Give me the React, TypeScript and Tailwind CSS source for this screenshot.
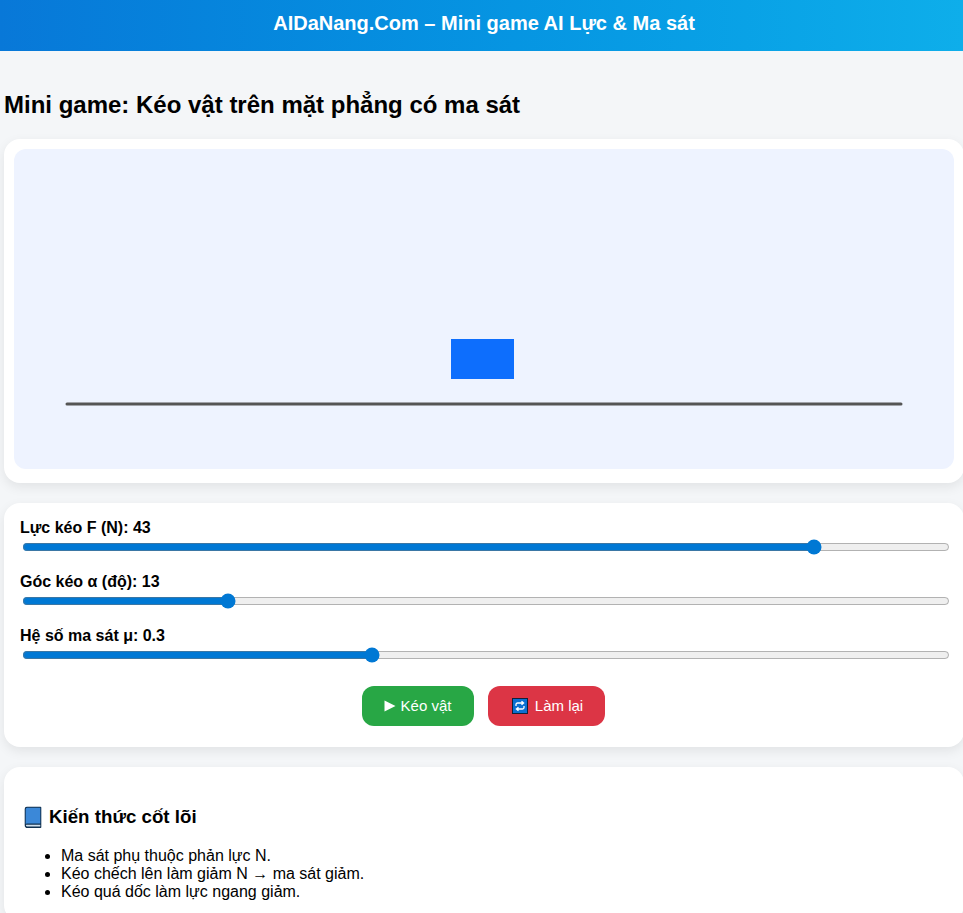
import { useState } from "react";

function RepeatIcon() {
  return (
    <svg viewBox="0 0 16 16" className="w-4 h-4 inline-block shrink-0">
      <rect x="0.5" y="0.5" width="15" height="15" fill="#0b6fd0" stroke="#10213a" />
      <path d="M4 8V6.500A1.500 1.500 0 0 1 5.500 5H11M9.500 3.200 11.600 5 9.500 6.800M12 8v1.500A1.500 1.500 0 0 1 10.500 11H5M6.500 9.200 4.400 11l2.100 1.800" fill="none" stroke="#fff" strokeWidth="1.300" />
    </svg>
  );
}

function BookIcon() {
  return (
    <svg viewBox="0 0 18 22" className="w-[18px] h-[22px] shrink-0">
      <path d="M3 .8h13.500a.8.800 0 0 1 .8.800v19.600a.8.800 0 0 1-.8.800H3.500A2.800 2.800 0 0 1 .7 19.200V3A2.200 2.200 0 0 1 3 .8z" fill="#10304f" />
      <path d="M3.200 1.800H16.300v15.700H3.200A1.500 1.500 0 0 0 1.700 18V3.300a1.500 1.500 0 0 1 1.500-1.500z" fill="#3b88d8" />
      <path d="M2.200 18.800h14.100v1.600H3.300a1 1 0 0 1-1.100-1.600z" fill="#cfe0ee" />
    </svg>
  );
}

export default function App() {
  const [force, setForce] = useState(43);
  const [angle, setAngle] = useState(13);
  const [mu, setMu] = useState(0.3);

  const handleReset = () => {
    setForce(43);
    setAngle(13);
    setMu(0.3);
  };

  return (
    <div className="min-h-screen bg-[#f4f6f8] text-black overflow-x-hidden font-['Liberation_Sans',Arial,sans-serif]">
      <header className="h-[51px] flex items-center justify-center pb-1.5 pl-[5px] bg-gradient-to-r from-[#0878d8] to-[#0eaeea] text-white text-xl font-bold">
        AIDaNang.Com – Mini game AI Lực &amp; Ma sát
      </header>

      <h2 className="mt-10 mb-5 ml-1 text-2xl leading-[28px] font-bold">
        Mini game: Kéo vật trên mặt phẳng có ma sát
      </h2>

      <div className="flex flex-col gap-5 ml-1 w-[960px] pb-5">
        <section className="bg-white rounded-2xl shadow-[0_4px_12px_rgba(0,0,0,0.08)] pt-2.5 px-2.5 pb-[14px]">
          <svg viewBox="0 0 940 320" className="block w-[940px] h-[320px] rounded-xl bg-[#eef3ff]">
            <line x1="53" y1="255" x2="887" y2="255" stroke="#555555" strokeWidth="3" strokeLinecap="round" />
            <rect x="437" y="190" width="63" height="40" fill="#0d6efd" />
          </svg>
        </section>

        <section className="bg-white rounded-2xl shadow-[0_4px_12px_rgba(0,0,0,0.08)] pt-4 px-4 pb-[21px]">
          <div className="flex flex-col gap-[18px]">
            <div>
              <label className="block h-[18px] leading-[18px] font-bold">Lực kéo F (N): {force}</label>
              <input
                type="range"
                min={0}
                max={50}
                value={force}
                onChange={(e) => setForce(Number(e.target.value))}
                className="block w-full mt-0.5 mx-0.5 accent-[#0078d4]"
              />
            </div>
            <div>
              <label className="block h-[18px] leading-[18px] font-bold">Góc kéo α (độ): {angle}</label>
              <input
                type="range"
                min={0}
                max={60}
                value={angle}
                onChange={(e) => setAngle(Number(e.target.value))}
                className="block w-full mt-0.5 mx-0.5 accent-[#0078d4]"
              />
            </div>
            <div>
              <label className="block h-[18px] leading-[18px] font-bold">Hệ số ma sát μ: {mu}</label>
              <input
                type="range"
                min={0}
                max={0.8}
                step={0.1}
                value={mu}
                onChange={(e) => setMu(Number(e.target.value))}
                className="block w-full mt-0.5 mx-0.5 accent-[#0078d4]"
              />
            </div>
          </div>

          <div className="flex justify-center gap-3.5 mt-[23px] pr-0.5">
            <button className="h-10 w-[112px] flex items-center justify-center gap-[5px] rounded-xl bg-[#28a745] text-white text-[15px]">
              <svg viewBox="0 0 12 12" className="w-3 h-3 shrink-0">
                <path d="M0.500 0.500 11.500 6 0.500 11.500z" fill="#fff" />
              </svg>
              Kéo vật
            </button>
            <button
              onClick={handleReset}
              className="h-10 w-[117px] flex items-center justify-center gap-[7px] pl-[3px] rounded-xl bg-[#dc3545] text-white text-[15px]"
            >
              <RepeatIcon />
              Làm lại
            </button>
          </div>
        </section>

        <section className="bg-white rounded-2xl shadow-[0_4px_12px_rgba(0,0,0,0.08)] pt-[38px] px-4 pb-5">
          <h3 className="flex items-center gap-[7px] pl-1 text-[18.72px] leading-6 font-bold">
            <BookIcon />
            Kiến thức cốt lõi
          </h3>
          <ul className="list-disc mt-[18px] pl-[41px] leading-[18px]">
            <li>Ma sát phụ thuộc phản lực N.</li>
            <li>Kéo chếch lên làm giảm N → ma sát giảm.</li>
            <li>Kéo quá dốc làm lực ngang giảm.</li>
          </ul>
        </section>
      </div>
    </div>
  );
}
